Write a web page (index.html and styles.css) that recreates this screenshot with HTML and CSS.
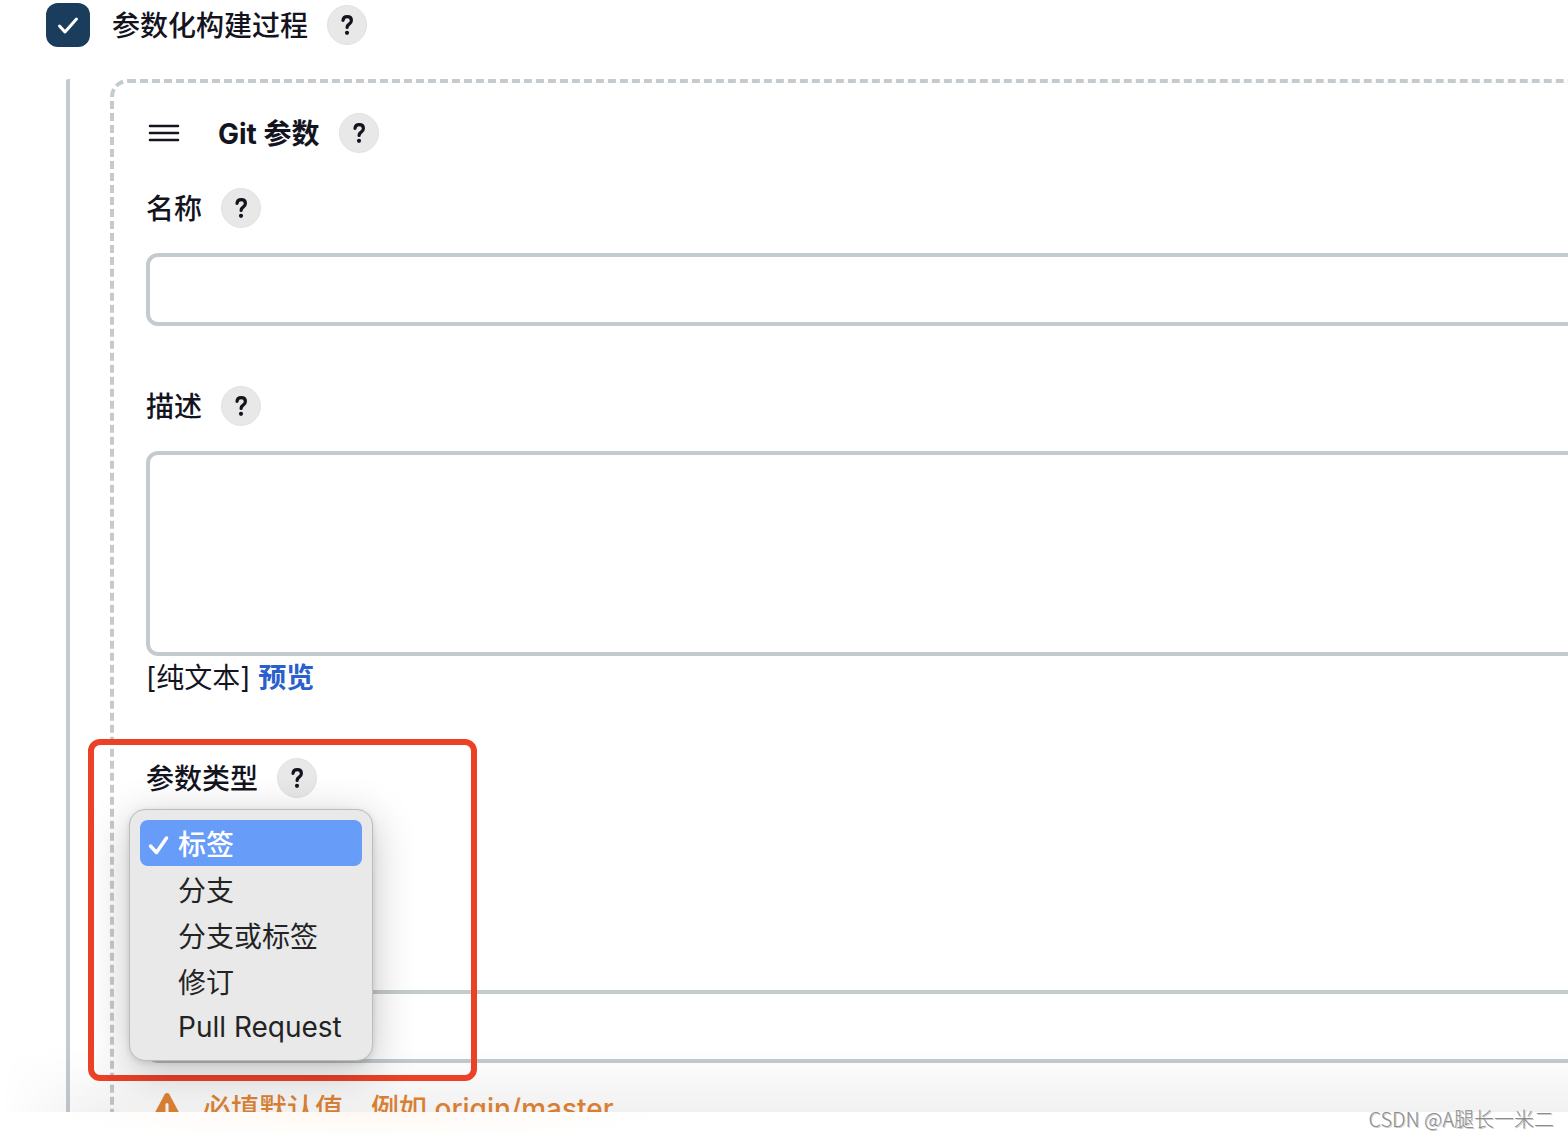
FILE: index.html
```html
<!DOCTYPE html>
<html lang="zh-CN">
<head>
  <meta charset="UTF-8" />
  <meta name="viewport" content="width=device-width, initial-scale=1.0"/>
  <title>参数化构建过程</title>
  <link rel="stylesheet" href="styles.css">
</head>
<body>

<!-- Shared icons -->
<svg class="icon-defs" aria-hidden="true">
  <symbol id="icon-help" viewBox="0 0 40 40">
    <path d="M16 15.400c.2-2.400 1.800-3.800 4.200-3.800 2.500 0 4.200 1.500 4.200 3.800 0 1.700-.9 2.700-2.300 3.700-1.500 1-2 1.700-2 3.300" fill="none" stroke="currentColor" stroke-width="3.200" stroke-linecap="round" stroke-linejoin="round"/>
    <circle cx="20" cy="27.800" r="2.100" fill="currentColor"/>
  </symbol>
</svg>

<main class="config">
  <div class="option-row">
    <input type="checkbox" id="parameterized" class="checkbox" checked>
    <label for="parameterized" class="label">参数化构建过程</label>
    <button type="button" class="help" aria-label="帮助"><svg><use href="#icon-help"/></svg></button>
  </div>

  <div class="nested">
    <section class="chunk">
      <!-- Parameter header -->
      <div class="chunk-header">
        <button type="button" class="drag-handle" aria-label="拖动">
          <svg viewBox="0 0 36 22"><path d="M4 4h28M4 11h28M4 18h28" stroke="currentColor" stroke-width="2.600" stroke-linecap="round"/></svg>
        </button>
        <h2 class="chunk-title">Git 参数</h2>
        <button type="button" class="help" aria-label="帮助"><svg><use href="#icon-help"/></svg></button>
      </div>

      <div class="field">
        <div class="field-head">
          <label for="name" class="label">名称</label>
          <button type="button" class="help" aria-label="帮助"><svg><use href="#icon-help"/></svg></button>
        </div>
        <input type="text" id="name" class="text-input">
      </div>

      <div class="field field-description">
        <div class="field-head">
          <label for="description" class="label">描述</label>
          <button type="button" class="help" aria-label="帮助"><svg><use href="#icon-help"/></svg></button>
        </div>
        <textarea id="description" class="text-input text-area"></textarea>
        <p class="format-note">[纯文本] <a href="#">预览</a></p>
      </div>

      <div class="field field-type">
        <div class="field-head">
          <label for="type" class="label">参数类型</label>
          <button type="button" class="help" aria-label="帮助"><svg><use href="#icon-help"/></svg></button>
        </div>
        <select id="type" class="type-menu" size="5">
          <option selected>标签</option>
          <option>分支</option>
          <option>分支或标签</option>
          <option>修订</option>
          <option>Pull Request</option>
        </select>
        <div class="highlight"></div>
      </div>

      <div class="field">
        <input type="text" class="text-input" aria-label="默认值">
        <p class="warning">
          <svg viewBox="0 0 32 32" aria-hidden="true"><path d="M13.700 3.300a2.700 2.700 0 0 1 4.600 0l11.500 21.500c1 1.900-.2 4.200-2.300 4.200H4.500c-2.100 0-3.300-2.300-2.300-4.200z" fill="currentColor"/><path d="M16 13.500v7" stroke="#fff" stroke-width="3" stroke-linecap="round"/><circle cx="16" cy="25" r="1.700" fill="#fff"/></svg>
          <span>必填默认值，例如 origin/master</span>
        </p>
      </div>
    </section>
  </div>
</main>

<footer class="bottom-bar">
  <span class="watermark">CSDN @A腿长一米二</span>
</footer>

</body>
</html>
```

FILE: styles.css
```css
* {
  box-sizing: border-box;
}

body {
  margin: 0;
  height: 100vh;
  display: flex;
  flex-direction: column;
  overflow: hidden;
  background: #fff;
  color: #14141f;
  font-family: Inter, "Noto Sans CJK SC", sans-serif;
  font-size: 28px;
  line-height: 40px;
}

h2,
p {
  margin: 0;
}

button {
  padding: 0;
  border: 0;
  background: none;
  color: inherit;
}

.icon-defs {
  position: absolute;
  width: 0;
  height: 0;
}

.config {
  flex: 1;
  min-height: 0;
  padding: 3px 0 0 46px;
  overflow: hidden;
  position: relative;
}

/* Soft shadow thrown upwards by the bottom bar */
.config::after {
  content: "";
  position: absolute;
  left: 0;
  right: 0;
  bottom: 0;
  height: 64px;
  background: linear-gradient(to bottom, rgba(0, 0, 0, 0), rgba(0, 0, 0, 0.055));
  -webkit-mask-image: linear-gradient(to right, transparent, #000 100px);
  mask-image: linear-gradient(to right, transparent, #000 100px);
  pointer-events: none;
}

.option-row,
.field-head,
.chunk-header {
  display: flex;
  align-items: center;
}

.option-row {
  height: 44px;
}

.label,
.chunk-title {
  padding-top: 2px;
  line-height: 38px;
}

.label {
  font-weight: 500;
}

.checkbox {
  appearance: none;
  width: 44px;
  height: 44px;
  margin: 0 22px 0 0;
  border-radius: 12px;
  background: #1b3d5d url("data:image/svg+xml,%3Csvg xmlns='http://www.w3.org/2000/svg' viewBox='0 0 44 44'%3E%3Cpath d='M13.500 23l5.500 6 11.500-13' fill='none' stroke='white' stroke-width='3' stroke-linecap='round' stroke-linejoin='round'/%3E%3C/svg%3E") center / 44px no-repeat;
}

.help {
  width: 40px;
  height: 40px;
  margin-left: 19px;
  border: 1px solid #e2e2e2;
  border-radius: 50%;
  background: #e8e8e8;
  display: flex;
  align-items: center;
  justify-content: center;
}

.help svg {
  width: 40px;
  height: 40px;
  flex: none;
}

.nested {
  margin: 32px 0 0 20px;
  padding-left: 40px;
  border-left: 4px solid #c4cbcf;
  border-top-left-radius: 2px;
}

/* The form is wider than the window and runs off its right side */
.chunk {
  margin-right: -48px;
  padding: 30px 32px 48px;
  border: 4px dashed #c4cbcf;
  border-radius: 18px;
}

.drag-handle {
  width: 36px;
  height: 40px;
  margin-right: 36px;
  display: flex;
  align-items: center;
}

.drag-handle svg {
  width: 36px;
  height: 22px;
}

.chunk-header {
  margin-bottom: 35px;
}

.chunk-title {
  font-size: 28px;
  font-weight: 700;
}

.field {
  margin-bottom: 60px;
}

.field-head {
  margin-bottom: 25px;
}

.text-input {
  display: block;
  width: 100%;
  height: 73px;
  padding: 12px 20px;
  border: 4px solid #c4cbcf;
  border-radius: 12px;
  background: #fff;
  font: inherit;
}

.text-area {
  height: 205px;
  resize: none;
}

.format-note {
  padding-top: 2px;
}

.format-note a {
  color: #2a60cc;
  font-weight: 700;
  text-decoration: none;
}

.field-type {
  position: relative;
  height: 172px;
}

/* Open drop-down, laid over the fields below it */
.type-menu {
  position: absolute;
  z-index: 2;
  top: 51px;
  left: -17px;
  width: 244px;
  height: 252px;
  padding: 10px;
  border: 1px solid #bcbcbc;
  border-radius: 16px;
  outline: none;
  overflow: hidden;
  background: #e9e9e9;
  box-shadow: 0 10px 44px rgba(0, 0, 0, 0.24), 0 2px 6px rgba(0, 0, 0, 0.12);
  color: #232323;
  font: inherit;
}

.type-menu option {
  display: flex;
  align-items: center;
  height: 46px;
  padding: 0 0 0 38px;
  border-radius: 8px;
}

.type-menu option:checked {
  background: url("data:image/svg+xml,%3Csvg xmlns='http://www.w3.org/2000/svg' viewBox='0 0 38 46'%3E%3Cpath d='M10.500 26l6 6.500 10-14.500' fill='none' stroke='white' stroke-width='3.500' stroke-linecap='round' stroke-linejoin='round'/%3E%3C/svg%3E") left center / 38px 46px no-repeat, linear-gradient(#679cf8, #679cf8);
  color: #fff;
  font-weight: 500;
}

.highlight {
  position: absolute;
  z-index: 1;
  top: -19px;
  left: -58px;
  width: 389px;
  height: 342px;
  border: 6px solid #eb4127;
  border-radius: 12px;
  pointer-events: none;
}

.warning {
  display: flex;
  align-items: center;
  gap: 20px;
  padding: 26px 0 0 5px;
  color: #e48636;
  font-weight: 500;
}

.warning svg {
  width: 32px;
  height: 32px;
  margin-bottom: 4px;
}

.bottom-bar {
  height: 26px;
  padding-right: 14px;
  display: flex;
  align-items: center;
  justify-content: flex-end;
  position: relative;
  background: radial-gradient(ellipse 320px 26px at 360px 0, #fff8f2, #fff);
}

.watermark {
  margin-bottom: 12px;
  color: #8c8c8c;
  font-family: "Noto Sans CJK SC", sans-serif;
  font-size: 20px;
  font-weight: 300;
  line-height: 26px;
  text-shadow: 1px 1px 0 #ccc;
}
```
